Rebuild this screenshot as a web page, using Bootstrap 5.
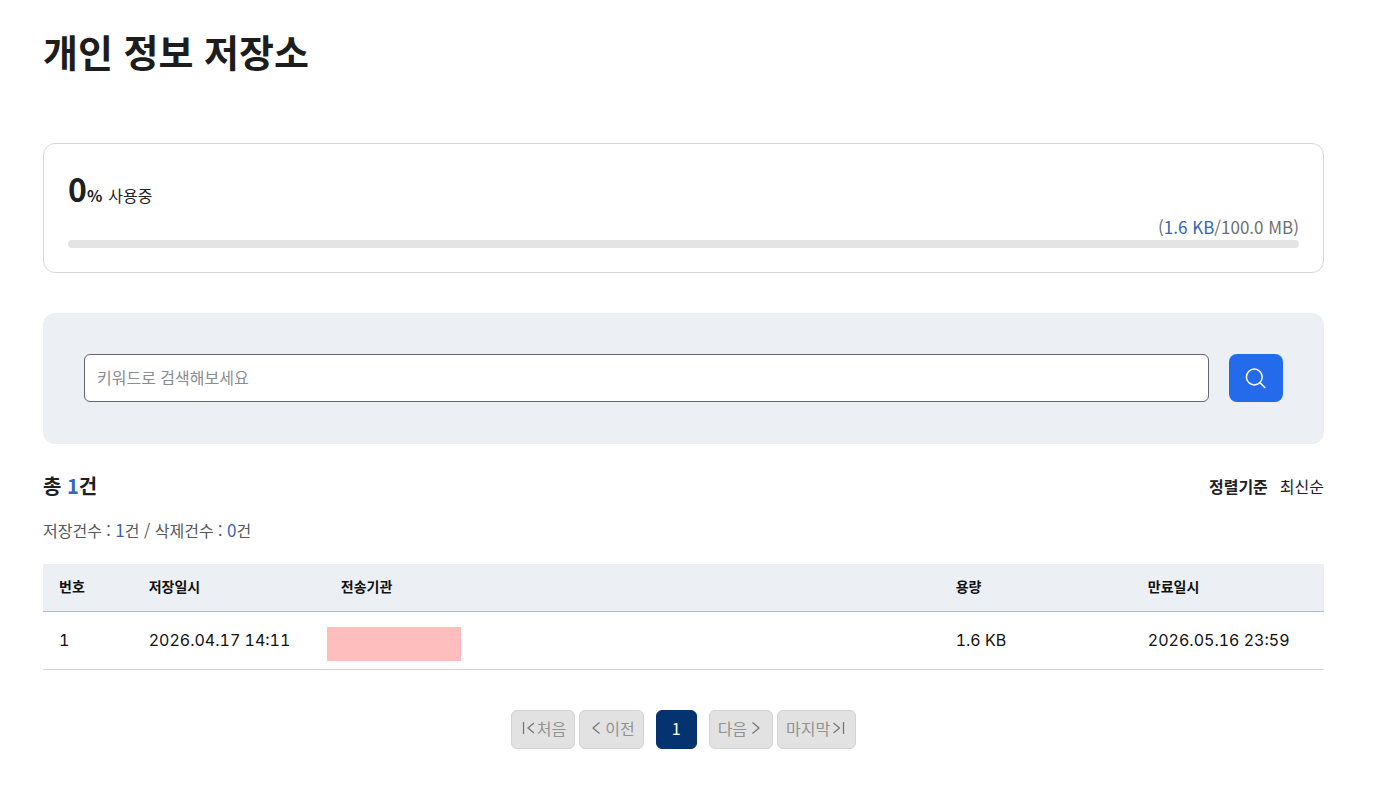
<!DOCTYPE html>
<html lang="ko">
<head>
<meta charset="utf-8">
<meta name="viewport" content="width=device-width, initial-scale=1">
<title>개인 정보 저장소</title>
<link href="https://cdn.jsdelivr.net/npm/bootstrap@5.3.0/dist/css/bootstrap.min.css" rel="stylesheet">
<style>
  body { font-family: "Noto Sans CJK KR", sans-serif; font-size: 16px; line-height: 24px; color: #1e2124; background: #fff; }
  .page { padding: 24px 64px 40px 43px; }
  .page-title { font-size: 38px; line-height: 54px; font-weight: 700; margin-bottom: 65px; color: #1d1d1d; }
  .latin { font-family: Inter, "Noto Sans CJK KR", sans-serif; font-size: 16px; font-variant-numeric: tabular-nums; }
  .blue { color: #3567b5; }
  .usage { border: 1px solid #d6d7d9; border-radius: 12px; padding: 24px; min-height: 130px; }
  .usage-num { font-size: 32px; line-height: 40px; font-weight: 700; }
  .usage-percent { margin-right: 6px; }
  .usage-size { color: #6d7072; font-size: 17px; line-height: 22px; margin: 8px 0 2px; }
  .usage .progress { height: 8px; border-radius: 4px; background: #e4e4e4; }
  .search { background: #ecf0f5; border-radius: 12px; padding: 41px 41px 42px; margin-top: 40px; gap: 20px; }
  .search .form-control { height: 48px; border: 1px solid #63666a; border-radius: 6px; padding: 0 12px 2px; font-size: 16px; }
  .search .form-control::placeholder { color: #8a8c8f; }
  .search .btn { width: 54px; height: 48px; border-radius: 8px; background: #246beb; border: 0; }
  .total { font-size: 20px; line-height: 28px; font-weight: 700; }
  .counts { color: #55585c; margin: 18px 0 22px; }
  .counts .blue { font-size: 17px; }
  .list { table-layout: fixed; color: #111; }
  .list th { background: #ecf0f5; font-size: 14px; line-height: 22px; font-weight: 700; padding: 11px 16px 14px; border-bottom: 1px solid #b1b8c8; color: #111; }
  .list td { padding: 16px 16px 17px; height: 58px; border-bottom: 1px solid #d2d3d5; color: #111; white-space: nowrap; }
  .list td.masked-cell { padding: 15px 2px 8px; }
  .masked { width: 134px; height: 34px; background: #ffbebe; }
  .pager { margin-top: 40px; gap: 4px; }
  .pager .btn { height: 39px; padding: 0 8px 3px; font-size: 16px; line-height: 24px; border: 1px solid #d3d3d4; border-radius: 6px; background: #e2e2e2; color: #929292; opacity: 1; }
  .pager .btn.current { width: 41px; background: #043370; border-color: #043370; color: #fff; margin: 0 8px; }
</style>
</head>
<body>
<main class="page">
  <h1 class="page-title">개인 정보 저장소</h1>

  <section class="usage">
    <div class="d-flex align-items-baseline">
      <span class="usage-num">0</span><strong class="usage-percent">%</strong><span>사용중</span>
    </div>
    <div class="usage-size text-end">(<span class="blue">1.6 KB</span>/100.0 MB)</div>
    <div class="progress" role="progressbar" aria-label="사용량" aria-valuenow="0" aria-valuemin="0" aria-valuemax="100"><div class="progress-bar" style="width:0%"></div></div>
  </section>

  <form class="search d-flex">
    <input class="form-control" type="text" placeholder="키워드로 검색해보세요" aria-label="키워드로 검색해보세요">
    <button class="btn p-0 flex-shrink-0 d-flex align-items-center justify-content-center" type="button" aria-label="검색">
      <svg width="24" height="24" viewBox="0 0 24 24" fill="none" stroke="#fff" stroke-width="1.5" stroke-linecap="round"><circle cx="10.300" cy="11" r="7.900"/><path d="M16 16.700L20.800 21.500"/></svg>
    </button>
  </form>

  <div class="d-flex justify-content-between align-items-center mt-4 pt-1">
    <div class="total">총 <span class="blue">1</span>건</div>
    <div class="d-flex"><strong class="me-2 pe-1">정렬기준</strong><span>최신순</span></div>
  </div>
  <p class="counts">저장건수 : <span class="blue">1</span>건 / 삭제건수 : <span class="blue">0</span>건</p>

  <table class="list w-100">
    <colgroup><col style="width:7%"><col style="width:15%"><col style="width:48%"><col style="width:15%"><col style="width:15%"></colgroup>
    <thead><tr><th scope="col">번호</th><th scope="col">저장일시</th><th scope="col">전송기관</th><th scope="col">용량</th><th scope="col">만료일시</th></tr></thead>
    <tbody><tr><td class="latin">1</td><td class="latin">2026.04.17 14:11</td><td class="masked-cell"><div class="masked"></div></td><td class="latin">1.6 KB</td><td class="latin">2026.05.16 23:59</td></tr></tbody>
  </table>

  <nav class="pager d-flex justify-content-center" aria-label="페이지">
    <button class="btn d-flex align-items-center" type="button" disabled><svg width="17" height="16" viewBox="0 0 17 16" fill="none" stroke="#777" stroke-width="1.3"><path d="M3.500 2v12M14 3L8 8l6 5"/></svg>처음</button>
    <button class="btn d-flex align-items-center" type="button" disabled><svg width="17" height="16" viewBox="0 0 17 16" fill="none" stroke="#777" stroke-width="1.3"><path d="M11.500 2.500L5 8l6.500 5.500"/></svg>이전</button>
    <button class="btn current p-0 pb-1" type="button" aria-current="page">1</button>
    <button class="btn d-flex align-items-center" type="button" disabled>다음<svg width="17" height="16" viewBox="0 0 17 16" fill="none" stroke="#777" stroke-width="1.3"><path d="M5.500 2.500L12 8l-6.500 5.500"/></svg></button>
    <button class="btn d-flex align-items-center" type="button" disabled>마지막<svg width="17" height="16" viewBox="0 0 17 16" fill="none" stroke="#777" stroke-width="1.3"><path d="M13.500 2v12M3.500 3l6 5l-6 5"/></svg></button>
  </nav>
</main>
<script src="https://cdn.jsdelivr.net/npm/bootstrap@5.3.0/dist/js/bootstrap.bundle.min.js"></script>
</body>
</html>
